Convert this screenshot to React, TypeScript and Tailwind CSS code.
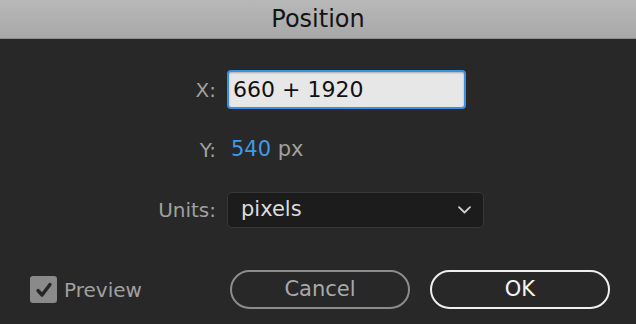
const font = { fontFamily: '"DejaVu Sans", "Liberation Sans", sans-serif' };

function Row({ label, height, children }: { label: string; height: string; children: React.ReactNode }) {
  return (
    <div className={`flex items-center ${height}`}>
      <div className="w-[216px] text-right text-[20px] text-[#a0a0a0]">{label}</div>
      <div className="ml-[11px]">{children}</div>
    </div>
  );
}

export default function App() {
  return (
    <div className="w-[636px] h-[324px] overflow-hidden bg-[#282828] select-none" style={font}>
      {/* title bar */}
      <div className="h-[39px] flex items-center justify-center bg-gradient-to-b from-[#b8b8b8] to-[#a8a8a8] border-b border-[#8e8e8e]">
        <span className="text-[24px] text-[#141414] leading-none">Position</span>
      </div>

      <div className="pt-[31px]">
        <Row label="X:" height="h-[39px]">
          <div className="w-[239px] h-[39px] rounded-[4px] border-2 border-[#3b8fe0] bg-[#e7e7e7] flex items-center pl-[4px] shadow-[inset_0_1px_2px_rgba(0,0,0,0.25)]">
            <span className="text-[22px] text-[#111]">660 + 1920</span>
          </div>
        </Row>

        <div className="mt-[21px]">
          <Row label="Y:" height="h-[40px]">
            <div className="pl-[4px] text-[21px]">
              <span className="text-[#3d9be9]">540</span>
              <span className="text-[#a0a0a0]"> px</span>
            </div>
          </Row>
        </div>

        <div className="mt-[22px]">
          <Row label="Units:" height="h-[36px]">
            <div className="w-[257px] h-[36px] rounded-[5px] border border-[#383838] bg-[#1c1c1c] flex items-center justify-between pl-[13px] pr-[12px]">
              <span className="text-[21px] text-[#dcdcdc]">pixels</span>
              <svg width="13" height="8" viewBox="0 0 13 8" fill="none">
                <path d="M1 1.2 L6.5 6.5 L12 1.2" stroke="#cfcfcf" strokeWidth="1.8" strokeLinecap="round" strokeLinejoin="round" />
              </svg>
            </div>
          </Row>
        </div>

        <div className="mt-[42px] h-[39px] flex items-center pl-[30px] pr-[26px]">
          <div className="flex items-center">
            <div className="w-[27px] h-[27px] rounded-[3px] bg-[#8a8a8a] flex items-center justify-center">
              <svg width="22" height="22" viewBox="0 0 22 22" fill="none">
                <path d="M5 11.5 L9 16 L17 5.5" stroke="#262626" strokeWidth="3.4" strokeLinecap="round" strokeLinejoin="round" />
              </svg>
            </div>
            <span className="ml-[7px] text-[20px] text-[#a0a0a0]">Preview</span>
          </div>
          <div className="ml-auto flex gap-[20px]">
            <button className="w-[180px] h-[39px] rounded-full border-2 border-[#8c8c8c] text-[21px] text-[#a8a8a8] flex items-center justify-center">
              Cancel
            </button>
            <button className="w-[180px] h-[39px] rounded-full border-2 border-[#efefef] text-[21px] text-[#f5f5f5] flex items-center justify-center">
              OK
            </button>
          </div>
        </div>
      </div>
    </div>
  );
}
